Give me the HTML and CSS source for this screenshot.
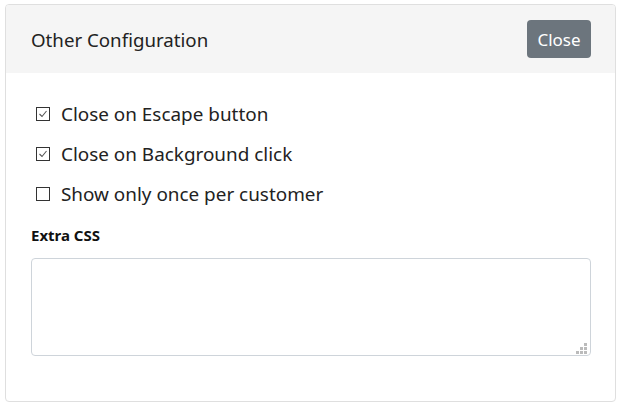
FILE: index.html
```html
<!DOCTYPE html>
<html>
<head>
<meta charset="utf-8">
<link rel="stylesheet" href="styles.css">
</head>
<body>
<div class="card">
  <div class="card-header">
    <span class="title">Other Configuration</span>
    <button class="btn">Close</button>
  </div>
  <div class="card-body">
    <label class="check"><span class="box"><svg width="14" height="14" viewBox="0 0 14 14"><path d="M3.5 7 L6 9.5 L10.5 4" fill="none" stroke="#555" stroke-width="1.1"/></svg></span>Close on Escape button</label>
    <label class="check"><span class="box"><svg width="14" height="14" viewBox="0 0 14 14"><path d="M3.5 7 L6 9.5 L10.5 4" fill="none" stroke="#555" stroke-width="1.1"/></svg></span>Close on Background click</label>
    <label class="check"><span class="box"></span>Show only once per customer</label>
    <div class="field-label">Extra CSS</div>
    <div class="textarea"><svg class="grip" width="11" height="11" viewBox="0 0 11 11"><rect x="8" y="0" width="3" height="3" fill="#bbb"/><rect x="4" y="4" width="3" height="3" fill="#bbb"/><rect x="8" y="4" width="3" height="3" fill="#bbb"/><rect x="0" y="8" width="3" height="3" fill="#bbb"/><rect x="4" y="8" width="3" height="3" fill="#bbb"/><rect x="8" y="8" width="3" height="3" fill="#bbb"/></svg></div>
  </div>
</div>
</body>
</html>
```
FILE: styles.css
```css
html, body { margin: 0; padding: 0; background: #fff; }
body { font-family: "Noto Sans", "Open Sans", sans-serif; color: #212529; padding: 4px 5px 4px 5px; }
.card {
  border: 1px solid #dfdfdf;
  border-radius: 4px;
  height: 398px;
  box-sizing: border-box;
  overflow: hidden;
}
.card-header {
  background: #f5f5f5;
  height: 68px;
  display: flex;
  align-items: center;
  justify-content: space-between;
  padding: 0 24px 0 25px;
}
.title { font-size: 18.7px; color: #222; }
.btn {
  background: #6c757d;
  color: #fff;
  border: none;
  border-radius: 4px;
  width: 64px;
  height: 38px;
  font-family: inherit;
  font-size: 17px;
  padding: 0;
}
.card-body { padding: 27px 24px 0 25px; }
.check {
  display: flex;
  align-items: center;
  height: 40px;
  font-size: 18.9px;
  color: #222;
  margin-top: -6px;
}
.check + .check { margin-top: 0; }
.box {
  width: 14px; height: 14px;
  border: 1px solid #333;
  box-sizing: border-box;
  margin: 0 11px 0 5px;
  display: flex;
  flex: none;
}
.box svg { margin: -1px; }
.field-label { font-weight: bold; font-size: 15px; color: #111; margin-top: 11px; }
.textarea {
  margin-top: 13px;
  height: 98px;
  border: 1px solid #ced4da;
  border-radius: 4px;
  box-sizing: border-box;
  position: relative;
}
.grip { position: absolute; right: 3px; bottom: 1px; }
```
